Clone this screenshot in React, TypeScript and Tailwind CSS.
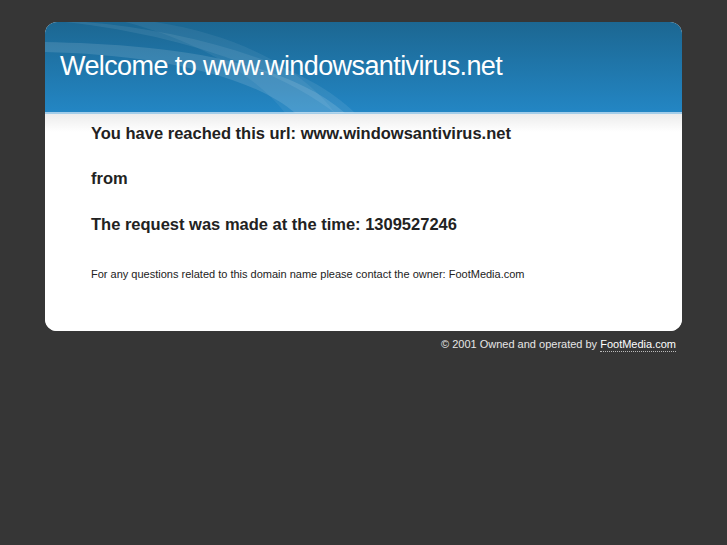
export default function App() {
  return (
    <div className="min-h-[545px] bg-[#363636] pt-[22px] pb-10 font-['Liberation_Sans',Arial,sans-serif]">
      <div className="mx-[45px] w-[637px] overflow-hidden rounded-[12px] bg-white">
        <div className="relative h-[92px] border-b-2 border-[#a3cde9] bg-gradient-to-b from-[#1c6792] to-[#2386c4]">
          <svg className="absolute inset-0" width="637" height="91" viewBox="0 0 637 91" preserveAspectRatio="none">
            <path d="M0 20 C 90 22, 230 30, 300 91 L 250 91 C 200 48, 90 32, 0 30 Z" fill="#ffffff" opacity="0.12" />
            <path d="M40 0 C 140 8, 260 40, 310 91 L 290 91 C 230 45, 130 12, 20 0 Z" fill="#ffffff" opacity="0.08" />
            <path d="M110 0 C 200 14, 260 50, 290 91 L 240 91 C 210 52, 150 18, 80 0 Z" fill="#ffffff" opacity="0.06" />
          </svg>
          <h1 className="relative pl-[15px] pt-[31px] text-[27px] leading-none tracking-[-0.6px] text-white">
            Welcome to www.windowsantivirus.net
          </h1>
        </div>
        <div className="bg-gradient-to-b from-[#ececec] to-white to-[18px] px-[46px] pt-[9px] pb-[50px] text-[#222]">
          <p className="text-[16.5px] font-bold leading-[20px]">You have reached this url: www.windowsantivirus.net</p>
          <p className="mt-[25px] text-[16.5px] font-bold leading-[20px]">from</p>
          <p className="mt-[26px] text-[16.5px] font-bold leading-[20px]">The request was made at the time: 1309527246</p>
          <p className="mt-[33px] text-[11px] leading-[14px]">
            For any questions related to this domain name please contact the owner: FootMedia.com
          </p>
        </div>
      </div>
      <div className="mr-[51px] mt-[6px] flex justify-end text-[11px] leading-[14px] text-[#e6e6e6]">
        <span>© 2001 Owned and operated by&nbsp;</span>
        <a className="border-b border-dotted border-[#bbb] text-white">FootMedia.com</a>
      </div>
    </div>
  )
}
